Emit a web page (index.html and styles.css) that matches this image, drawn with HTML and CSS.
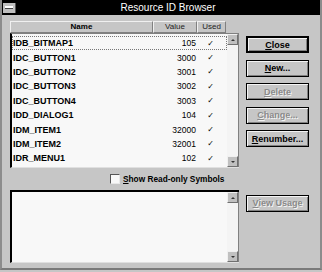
FILE: index.html
```html
<!DOCTYPE html>
<html lang="en">
<head>
  <meta charset="UTF-8" />
  <title>Resource ID Browser</title>
  <link rel="stylesheet" href="styles.css">
</head>
<body>
  <div class="window">
    <div class="titlebar">
      <div class="sysmenu"><span></span></div>
      <div class="title">Resource ID Browser</div>
    </div>

    <div class="client">
      <div class="list-area">
        <div class="header">
          <div class="hcol name-col bold">Name</div>
          <div class="hcol value-col">Value</div>
          <div class="hcol used-col">Used</div>
        </div>
        <div class="listbox">
          <div class="rows">
            <div class="row focus"><span class="name">IDB_BITMAP1</span><span class="value">105</span><span class="used">✓</span></div>
            <div class="row"><span class="name">IDC_BUTTON1</span><span class="value">3000</span><span class="used">✓</span></div>
            <div class="row"><span class="name">IDC_BUTTON2</span><span class="value">3001</span><span class="used">✓</span></div>
            <div class="row"><span class="name">IDC_BUTTON3</span><span class="value">3002</span><span class="used">✓</span></div>
            <div class="row"><span class="name">IDC_BUTTON4</span><span class="value">3003</span><span class="used">✓</span></div>
            <div class="row"><span class="name">IDD_DIALOG1</span><span class="value">104</span><span class="used">✓</span></div>
            <div class="row"><span class="name">IDM_ITEM1</span><span class="value">32000</span><span class="used">✓</span></div>
            <div class="row"><span class="name">IDM_ITEM2</span><span class="value">32001</span><span class="used">✓</span></div>
            <div class="row"><span class="name">IDR_MENU1</span><span class="value">102</span><span class="used">✓</span></div>
          </div>
          <div class="scrollbar">
            <div class="arrow up"><i></i></div>
            <div class="track"></div>
            <div class="arrow down"><i></i></div>
          </div>
        </div>
      </div>

      <div class="buttons">
        <button class="btn default"><u>C</u>lose</button>
        <button class="btn"><u>N</u>ew...</button>
        <button class="btn disabled"><u>D</u>elete</button>
        <button class="btn disabled"><u>C</u>hange...</button>
        <button class="btn"><u>R</u>enumber...</button>
      </div>

      <div class="check-row">
        <span class="checkbox"></span>
        <span class="check-label"><u>S</u>how Read-only Symbols</span>
      </div>

      <div class="usage-box">
        <div class="usage-text"></div>
        <div class="scrollbar">
          <div class="arrow up"><i></i></div>
          <div class="track"></div>
          <div class="arrow down"><i></i></div>
        </div>
      </div>

      <div class="usage-btn">
        <button class="btn disabled"><u>V</u>iew Usage</button>
      </div>
    </div>
  </div>
</body>
</html>
```

FILE: styles.css
```css
body {
  margin: 0;
  background: #c6c6c6;
  font-family: 'Liberation Sans', Arial, sans-serif;
}

.window {
  width: 318px;
  height: 268px;
  background: #c6c6c6;
  border-left: 2px solid #8c8c8c;
  border-right: 2px solid #8c8c8c;
  border-bottom: 2px solid #7a7a7a;
}

.titlebar {
  height: 15px;
  background: #000;
  display: flex;
  align-items: center;
}

.sysmenu {
  width: 12px;
  height: 10px;
  margin-left: 1px;
  background: #c0c0c0;
  border-right: 1px solid #555;
  display: flex;
  align-items: center;
  justify-content: center;
}

.sysmenu span {
  width: 8px;
  height: 2px;
  background: #fff;
  border-bottom: 1px solid #444;
}

.title {
  flex: 1;
  text-align: center;
  color: #fff;
  font-size: 10px;
}

.client {
  display: grid;
  grid-template-columns: 229px 63px;
  grid-template-rows: 147px 22px 73px;
  column-gap: 7px;
  padding: 6px 0 0 8px;
}

/* list with header */
.list-area {
  display: flex;
  flex-direction: column;
}

.header {
  display: flex;
  width: 216px;
  height: 12px;
  font-size: 8px;
  color: #222;
}

.hcol {
  background: #c6c6c6;
  border-top: 1px solid #f0f0f0;
  border-left: 1px solid #f0f0f0;
  border-right: 1px solid #808080;
  border-bottom: 1px solid #808080;
  text-align: center;
  line-height: 10px;
  box-sizing: border-box;
}

.hcol.bold {
  font-weight: bold;
  color: #000;
}

.name-col { width: 143px; }
.value-col { width: 44px; }
.used-col { width: 29px; }

.listbox {
  display: flex;
  height: 135px;
  box-sizing: border-box;
  border-left: 2px solid #000;
  border-top: 1px solid #808080;
  border-bottom: 1px solid #e0e0e0;
  background: #f8f8f8;
}

.rows {
  flex: 1;
  padding-top: 2px;
}

.row {
  display: flex;
  height: 14.4px;
  align-items: center;
  font-size: 9px;
  color: #000;
  box-sizing: border-box;
}

.row.focus {
  outline: 1px dotted #777;
  outline-offset: -1px;
}

.row .name {
  width: 141px;
  padding-left: 1px;
  font-weight: bold;
}

.row .value {
  width: 42px;
  text-align: right;
  font-size: 8.5px;
}

.row .used {
  width: 29px;
  text-align: center;
  font-family: 'DejaVu Sans', sans-serif;
  font-size: 8px;
}

.scrollbar {
  width: 11px;
  display: flex;
  flex-direction: column;
  background: #f4f4f4;
  border-right: 1px solid #808080;
}

.scrollbar .track {
  flex: 1;
}

.arrow {
  height: 11px;
  box-sizing: border-box;
  background: #c0c0c0;
  border-top: 1px solid #f0f0f0;
  border-left: 1px solid #f0f0f0;
  border-right: 1px solid #707070;
  border-bottom: 1px solid #707070;
  display: flex;
  align-items: center;
  justify-content: center;
}

.arrow i {
  width: 0;
  height: 0;
  border-left: 2px solid transparent;
  border-right: 2px solid transparent;
}

.arrow.up i { border-bottom: 2px solid #333; }
.arrow.down i { border-top: 2px solid #333; }

/* buttons */
.buttons {
  display: flex;
  flex-direction: column;
  padding-top: 15px;
  gap: 6.5px;
}

.btn {
  width: 63px;
  height: 17px;
  padding: 0;
  margin: 0;
  background: #c6c6c6;
  border: 1px solid #000;
  box-shadow: inset 1px 1px #f4f4f4, inset -1px -1px #808080;
  font-family: 'Liberation Sans', Arial, sans-serif;
  font-size: 9px;
  font-weight: bold;
  color: #000;
}

.btn.default {
  border-width: 2px;
}

.btn.disabled {
  color: #8a8a8a;
  text-shadow: 1px 1px #f4f4f4;
}

/* checkbox row */
.check-row {
  grid-column: 1 / 3;
  display: flex;
  align-items: center;
  padding-left: 100px;
  gap: 3px;
}

.checkbox {
  width: 8px;
  height: 8px;
  background: #f8f8f8;
  border-top: 1px solid #555;
  border-left: 1px solid #555;
  border-right: 1px solid #e8e8e8;
  border-bottom: 1px solid #e8e8e8;
}

.check-label {
  font-size: 8.3px;
  font-weight: bold;
  color: #000;
}

/* usage box */
.usage-box {
  display: flex;
  height: 73px;
  box-sizing: border-box;
  border-left: 2px solid #000;
  border-top: 2px solid #000;
  border-bottom: 1px solid #e0e0e0;
  background: #f8f8f8;
}

.usage-text {
  flex: 1;
}

.usage-btn {
  padding-top: 2px;
}
```
